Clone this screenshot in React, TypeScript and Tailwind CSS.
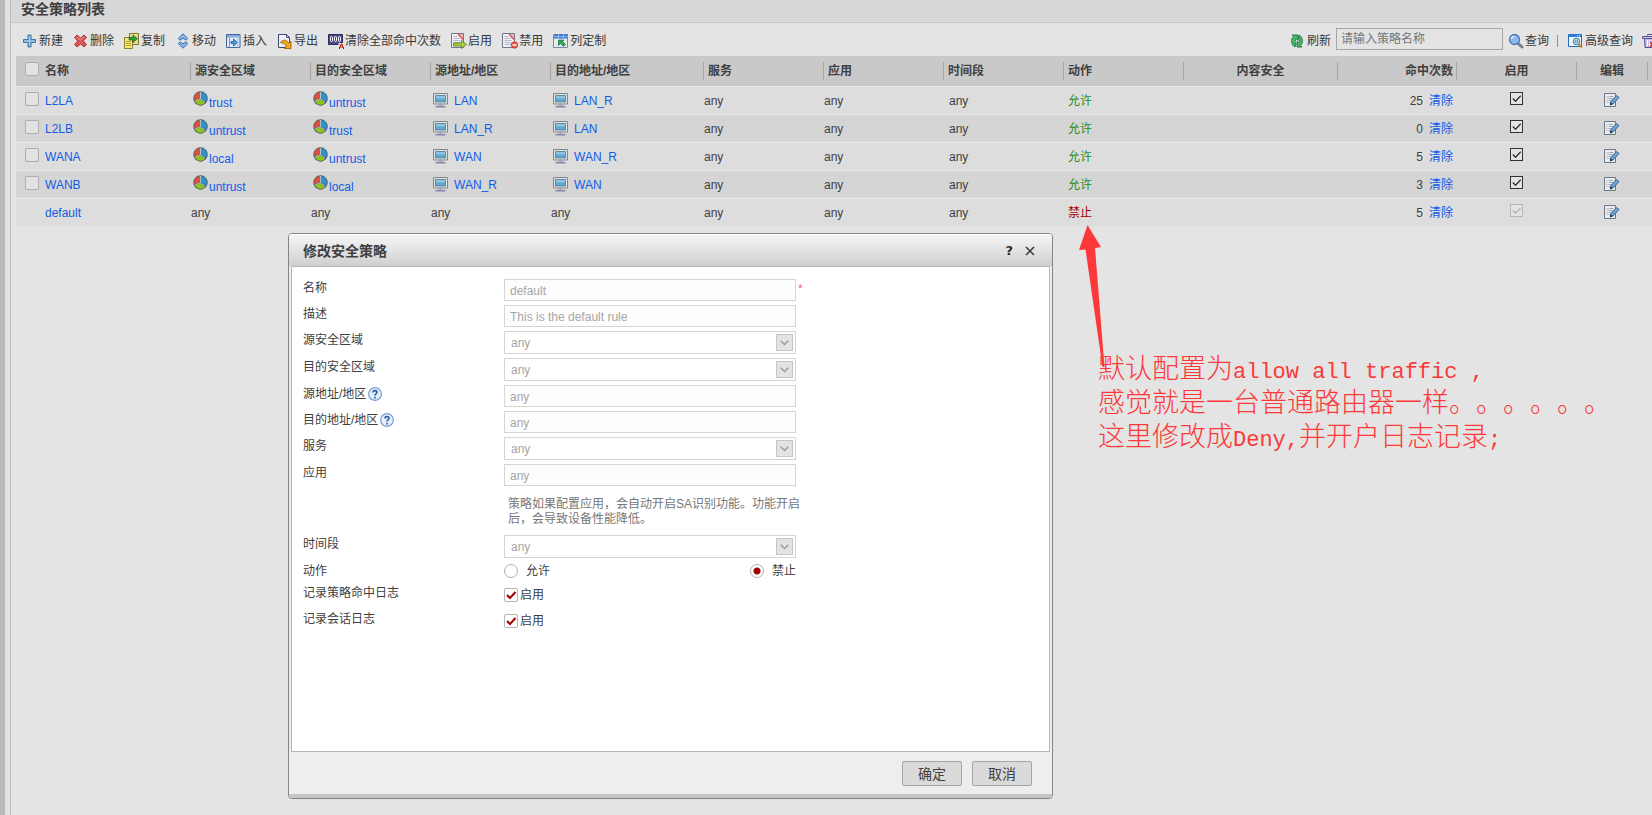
import type { ReactNode } from "react";

const sans = "font-['Liberation_Sans','Noto_Sans_CJK_SC',sans-serif]";

/* ---------- icons ---------- */

function Icon({ children }: { children: ReactNode }) {
  return (
    <svg width="16" height="16" viewBox="0 0 16 16" fill="none" className="shrink-0" aria-hidden="true">
      {children}
    </svg>
  );
}

const PlusIcon = () => (
  <Icon>
    <path d="M5.500 1.500h3v4.500h4.500v3h-4.500v4.500h-3v-4.500h-4.500v-3h4.500z" transform="translate(.5 .5)" fill="#7fb2dc" stroke="#3f75a8" />
    <path d="M7.500 3v10M2.500 8h10" stroke="#a4cbe8" />
  </Icon>
);

const DeleteIcon = () => (
  <Icon>
    <path d="M1.500 4.500 4 2l3.500 3L11 2l2.500 2.500L10.300 8l3.200 3.500L11 14l-3.500-3L4 14l-2.500-2.500L4.700 8z" fill="#d9555a" stroke="#b5343b" />
    <path d="m4 4 3.500 3L11 4" stroke="#ee9a98" />
  </Icon>
);

const CopyIcon = () => (
  <Icon>
    <path d="M5.500.5h9v11h-9z" fill="#e9dd8a" stroke="#7d742d" />
    <path d="M.5 4.500h8v11h-8z" fill="#f5e97b" stroke="#8a8030" />
    <path d="M2 8.500h5M2 10.500h5M2 12.500h5" stroke="#b59a1e" />
    <path d="M5 4.500h4V2l4.500 3.800L9 9.500V7H5z" fill="#2f9e3d" stroke="#17662a" strokeWidth=".7" />
  </Icon>
);

const MoveIcon = () => (
  <Icon>
    <path d="m8 .8 4.800 4.700-1.800 1.700-3-2-3 2-1.800-1.700z" fill="#86b7e2" stroke="#3872ad" />
    <path d="m8 15.200 4.800-4.700-1.800-1.700-3 2-3-2-1.800 1.700z" fill="#86b7e2" stroke="#3872ad" />
  </Icon>
);

const InsertIcon = () => (
  <Icon>
    <path d="M.5 1.500h13.500v13H.5z" fill="#dfe9f5" stroke="#41659f" />
    <path d="M1 2h12.500v2.500H1z" fill="#8aa7d6" />
    <path d="M3.500 4.500v10" stroke="#7d97c4" />
    <path d="M12 4.500v10" stroke="#b2c4e0" />
    <path d="M5 8.500h2.500V6l4 3.500-4 3.500v-2.500H5z" fill="#4f9be0" stroke="#235a9c" strokeWidth=".8" />
  </Icon>
);

const ExportIcon = () => (
  <Icon>
    <path d="M1.500 1.500h8l3 3v10h-11z" fill="#eef1f8" stroke="#3d467d" />
    <path d="M9.500 1.500v3h3" stroke="#3d467d" />
    <path d="M3.500 9.500c2-3 6-3.500 8 .5l2.500-1.500v7H7.500L9.300 13C8 10.500 6 10 3.500 9.500z" fill="#f5a81c" stroke="#8f5300" strokeWidth=".8" />
  </Icon>
);

const CounterIcon = () => (
  <Icon>
    <path d="M.5 1.500h14v10H.5z" fill="#4a4a86" stroke="#2d2d61" />
    <rect x="2.500" y="3.500" width="2" height="5" rx="1" stroke="#fff" />
    <rect x="6.500" y="3.500" width="2" height="5" rx="1" stroke="#fff" />
    <rect x="10.500" y="3.500" width="2" height="5" rx="1" stroke="#fff" />
    <path d="M10.500 10h5.500v6h-5.500z" fill="#e4e4e4" />
    <path d="M11.500 16v-2h4v2M12.500 13.500l.5-2.500h1l.5 2.500" stroke="#c00000" />
  </Icon>
);

const RuleSheet = () => (
  <>
    <path d="M.5.5h12v14H.5z" fill="#f0f1f5" stroke="#6e7787" />
    <path d="M2.500 3.500h4M2.500 5.500h6M2.500 7.500h7M2.500 9.500h7M2.500 11.500h7" stroke="#b3b9c6" />
    <path d="M7 1h5v6z" fill="#f2b4b4" />
    <path d="m7 1 5 5.500" stroke="#e05555" strokeWidth="1.500" />
  </>
);

const EnableIcon = () => (
  <Icon>
    <RuleSheet />
    <path d="M2.500 10h8V7.500L15.500 11.500l-5 4V13h-8z" fill="#a6cf3c" stroke="#4d7f1b" strokeWidth=".8" />
  </Icon>
);

const DisableIcon = () => (
  <Icon>
    <RuleSheet />
    <circle cx="12.500" cy="12" r="3.300" fill="#e2583e" stroke="#b1341f" strokeWidth=".6" />
    <path d="M10.500 12h4" stroke="#fff" strokeWidth="1.500" />
  </Icon>
);

const ColumnsIcon = () => (
  <Icon>
    <path d="M.5 1.500h14v13H.5z" fill="#e9eef5" stroke="#7688a8" />
    <path d="M1 1h13.500v4.500H1z" fill="#3f78cf" />
    <path d="M1 3.500h13.500M5.500 1v4M10.500 1v4" stroke="#a9c4ee" strokeWidth=".8" />
    <path d="M5.500 7h5.500L9.500 8.500l3 3-2 2-3-3-2 2z" fill="#2fa557" stroke="#13703a" strokeWidth=".7" />
  </Icon>
);

const RefreshIcon = () => (
  <Icon>
    <path d="M5 14C.8 12 .8 5.500 3.500 3.500L2 2h6v5.500L6.300 5.800C4.800 7 4.600 9.500 6 11z" fill="#49b96d" stroke="#13743a" strokeWidth=".9" />
    <path d="M9 2c4.200 2 4.200 8.500 1.500 10.500L12 14H7V8.500l1.500 1.700C9.700 9 9.700 6.500 8.500 5z" fill="#49b96d" stroke="#13743a" strokeWidth=".9" />
  </Icon>
);

const SearchIcon = () => (
  <Icon>
    <path d="m9.500 10 4.500 4" stroke="#76808c" strokeWidth="3" strokeLinecap="round" />
    <circle cx="6.500" cy="6.500" r="5" fill="#8fb8ec" stroke="#4d77b4" strokeWidth="1.300" />
    <path d="M3.500 6c.3-1.800 1.500-2.600 3-2.600" stroke="#e6f2ff" strokeWidth="1.400" />
  </Icon>
);

const AdvancedIcon = () => (
  <Icon>
    <path d="M.5 1.500h13v12H.5z" fill="#f4f8fc" stroke="#1d6bc4" />
    <path d="M1 1.500h12.500V4H1z" fill="#2d7fdc" />
    <path d="M9 2.700h1M11 2.700h1" stroke="#fff" />
    <path d="m10.500 11 3.500 3.500" stroke="#c28a1b" strokeWidth="2" />
    <circle cx="8.500" cy="8.500" r="3.300" fill="#bfe0f8" stroke="#48708f" />
    <circle cx="8.500" cy="8.500" r="1.300" stroke="#48708f" strokeWidth=".8" />
  </Icon>
);

const TrashIcon = () => (
  <Icon>
    <path d="M5.500 2.500v-1h5v1" stroke="#574f96" />
    <path d="M.5 3.500h14v2H.5z" fill="#cfcbe8" stroke="#574f96" />
    <path d="M2.500 5.500h10l-.5 9H3z" fill="#c3bfe0" stroke="#574f96" />
    <path d="M5.500 7v6M7.500 7v6" stroke="#fff" />
    <path d="m8 9 5 5M13 9l-5 5" stroke="#d22" strokeWidth="1.500" />
  </Icon>
);

const ZoneIcon = () => (
  <svg width="15" height="15" viewBox="0 0 15 15" className="shrink-0" aria-hidden="true">
    <circle cx="7.500" cy="7.500" r="7.200" fill="#4c5a60" />
    <path d="M7 7V1A6.300 6.300 0 0 0 1.600 9.300z" fill="#de5040" />
    <path d="M8 7V1a6.500 6.500 0 0 1 4.600 10.200z" fill="#2e93d3" />
    <path d="M7.500 8.200 2 10.600a6.500 6.500 0 0 0 9.800 1.600z" fill="#8ec31a" />
    <path d="M7.500 1v6.700L2 10M7.500 7.700l4.600 4" stroke="#cfdcdc" strokeWidth=".8" fill="none" />
  </svg>
);

const HostIcon = () => (
  <svg width="16" height="15" viewBox="0 0 16 15" className="shrink-0" aria-hidden="true">
    <path d="M.5.5h14v10.500H.5z" fill="#e2e2e2" stroke="#858585" />
    <path d="M2.500 2.500h10v6.500h-10z" fill="#5fa6cd" stroke="#5c8ba5" />
    <path d="M3 3h9v2.500H3z" fill="#8cc3df" />
    <path d="M5.500 11.500h4v1h-4z" fill="#8c8cb0" />
    <path d="M2.500 13h10v1.500h-10z" fill="#8581a8" />
  </svg>
);

const EditIcon = () => (
  <svg width="16" height="16" viewBox="0 0 16 16" fill="none" className="inline-block" aria-hidden="true">
    <path d="M.5 1.500h11v13H.5z" fill="#ebedef" stroke="#6d7785" />
    <path d="M2.500 4.500h1M2.500 6.500h1M2.500 8.500h1M2.500 10.500h1M4.500 4.500h5M4.500 6.500h5M4.500 8.500h4M4.500 10.500h2" stroke="#a2a8b2" />
    <path d="m6.300 12.700.9-3.400 5.300-5.800 2.500 2-5.300 6z" fill="#6ea6da" stroke="#2f5f8f" strokeWidth=".9" />
    <path d="m5.800 13.400.9-3 2.200 1.800z" fill="#1f3246" />
  </svg>
);

const HelpIcon = () => (
  <svg width="14" height="14" viewBox="0 0 14 14" fill="none" className="ml-0.5 shrink-0" aria-hidden="true">
    <circle cx="7" cy="7" r="6.400" fill="#e3eefb" stroke="#7c9fd8" strokeWidth="1.200" />
    <path d="M5 5.500C5 3 9 3 9 5.300 9 6.800 7 6.800 7 8.400M7 9.800v1.600" stroke="#2d5da8" strokeWidth="1.600" />
  </svg>
);

/* ---------- small controls ---------- */

function ToolButton({ icon, label }: { icon: ReactNode; label: string }) {
  return (
    <button type="button" className="flex items-center gap-px whitespace-nowrap text-[#383838]">
      {icon}
      {label}
    </button>
  );
}

type CheckProps = { label: string; checked?: boolean; disabled?: boolean; tone?: "dark" | "red"; id?: string };

function Check({ label, checked = false, disabled = false, tone = "dark", id }: CheckProps) {
  const look =
    tone === "red"
      ? "size-3.5 rounded-xs border-[#b5b5b5] bg-white"
      : checked
        ? "size-[13px] border-[#333] bg-[#e4e4e4] disabled:border-[#b5b5b5]"
        : "size-3.5 rounded-xs border-[#adadad] bg-[#e2e2e2]";
  return (
    <span className={`relative inline-flex align-middle ${disabled ? "text-[#b5b5b5]" : tone === "red" ? "text-[#a00000]" : "text-[#333]"}`}>
      <input
        id={id}
        type="checkbox"
        aria-label={id ? undefined : label}
        defaultChecked={checked}
        disabled={disabled}
        className={`peer appearance-none border ${look}`}
      />
      <svg viewBox="0 0 14 14" fill="none" className="pointer-events-none absolute inset-0 hidden size-full peer-checked:block" aria-hidden="true">
        <path d="m3 7 3 3 5.500-6" stroke="currentColor" strokeWidth={tone === "red" ? 2 : 1.4} />
      </svg>
    </span>
  );
}

/* ---------- policy table ---------- */

type Policy = { name: string; src: string; dst: string; srcAddr: string; dstAddr: string; hits: number };

const policies: Policy[] = [
  { name: "L2LA", src: "trust", dst: "untrust", srcAddr: "LAN", dstAddr: "LAN_R", hits: 25 },
  { name: "L2LB", src: "untrust", dst: "trust", srcAddr: "LAN_R", dstAddr: "LAN", hits: 0 },
  { name: "WANA", src: "local", dst: "untrust", srcAddr: "WAN", dstAddr: "WAN_R", hits: 5 },
  { name: "WANB", src: "untrust", dst: "local", srcAddr: "WAN_R", dstAddr: "WAN", hits: 3 },
  { name: "default", src: "any", dst: "any", srcAddr: "any", dstAddr: "any", hits: 5 },
];

const columns = [
  { title: "源安全区域", width: "w-[120px]", align: "pl-1" },
  { title: "目的安全区域", width: "w-[120px]", align: "pl-1" },
  { title: "源地址/地区", width: "w-[120px]", align: "pl-1" },
  { title: "目的地址/地区", width: "w-[153px]", align: "pl-1" },
  { title: "服务", width: "w-[120px]", align: "pl-1" },
  { title: "应用", width: "w-[120px]", align: "pl-1" },
  { title: "时间段", width: "w-[120px]", align: "pl-1" },
  { title: "动作", width: "w-[120px]", align: "pl-1" },
  { title: "内容安全", width: "w-[154px]", align: "justify-center" },
  { title: "命中次数", width: "w-[119px]", align: "justify-end pr-[3px]" },
  { title: "启用", width: "w-[120px]", align: "justify-center" },
  { title: "编辑", width: "w-[71px]", align: "justify-center" },
  { title: "", width: "w-[5px]", align: "" },
];

const link = "text-[#0f5ce8]";

function Zone({ name }: { name: string }) {
  if (name === "any") return <>any</>;
  return (
    <span className="flex items-start pl-0.5">
      <ZoneIcon />
      <a href="#zone" className={`pt-1 pl-px ${link}`}>
        {name}
      </a>
    </span>
  );
}

function Address({ name }: { name: string }) {
  if (name === "any") return <>any</>;
  return (
    <span className="flex items-center gap-[5px] pl-0.5">
      <HostIcon />
      <a href="#address" className={link}>
        {name}
      </a>
    </span>
  );
}

function PolicyTable() {
  return (
    <table className="w-full table-fixed border-separate border-spacing-0 text-left">
      <thead className="bg-[#c9c9c9]">
        <tr className="h-[30px]">
          <th className="p-0 pl-[9px]">
            <span className="flex items-center gap-[6px]">
              <span className="flex pb-1">
                <Check label="全选" />
              </span>
              名称
            </span>
          </th>
          {columns.map((c, i) => (
            <th key={i} className={`p-0 ${c.width}`}>
              <div className={`flex h-[18px] items-center whitespace-nowrap border-l border-[#a5a5a5] ${c.align}`}>{c.title}</div>
            </th>
          ))}
        </tr>
      </thead>
      <tbody className="[&_td]:border-t [&_td]:border-[#e8e8e8]">
        {policies.map((p) => {
          const isDefault = p.name === "default";
          return (
            <tr key={p.name} className="h-7 odd:bg-[#dddddd] even:bg-[#d5d5d5]">
              <td className="p-0">
                <span className="flex items-center gap-[6px] pl-[9px]">
                  {isDefault ? (
                    <span className="w-3.5" />
                  ) : (
                    <span className="flex pb-1">
                      <Check label={p.name} />
                    </span>
                  )}
                  <a href="#policy" className={link}>
                    {p.name}
                  </a>
                </span>
              </td>
              <td className="p-0 pl-px"><Zone name={p.src} /></td>
              <td className="p-0 pl-px"><Zone name={p.dst} /></td>
              <td className="p-0 pl-px"><Address name={p.srcAddr} /></td>
              <td className="p-0 pl-px"><Address name={p.dstAddr} /></td>
              <td className="p-0 pl-px">any</td>
              <td className="p-0 pl-px">any</td>
              <td className="p-0 pl-[6px]">any</td>
              <td className={`p-0 pl-[5px] ${isDefault ? "text-[#a00000]" : "text-[#1f8f2a]"}`}>{isDefault ? "禁止" : "允许"}</td>
              <td className="p-0" />
              <td className="p-0">
                <div className="flex justify-end gap-[6px] pr-[3px]">
                  {p.hits}
                  <a href="#clear" className={link}>清除</a>
                </div>
              </td>
              <td className="p-0 pb-1 pl-px text-center leading-none">
                <Check label={`启用 ${p.name}`} checked disabled={isDefault} />
              </td>
              <td className="p-0 pb-0.5 text-center leading-none">
                <button type="button" aria-label={`编辑 ${p.name}`} className="align-middle">
                  <EditIcon />
                </button>
              </td>
              <td className="p-0" />
            </tr>
          );
        })}
      </tbody>
    </table>
  );
}

/* ---------- edit dialog ---------- */

function Row({ label, id, help, children }: { label: string; id?: string; help?: boolean; children: ReactNode }) {
  return (
    <div className="flex items-start">
      <div className="flex w-[201px] shrink-0 items-center leading-[18px]">
        {id ? <label htmlFor={id}>{label}</label> : <span>{label}</span>}
        {help && <HelpIcon />}
      </div>
      {children}
    </div>
  );
}

function TextRow({ label, id, value, help, required }: { label: string; id: string; value: string; help?: boolean; required?: boolean }) {
  return (
    <Row label={label} id={id} help={help}>
      <input id={id} type="text" disabled defaultValue={value} className="h-[22px] w-[292px] border border-[#d5d5d5] bg-[#fdfdfd] px-[5px] pt-0.5 text-[#a5a5a5]" />
      {required && <span className="pl-0.5 leading-5 text-[#f66]">*</span>}
    </Row>
  );
}

function SelectRow({ label, id }: { label: string; id: string }) {
  return (
    <Row label={label} id={id}>
      <div className="relative">
        <select id={id} disabled className="block h-[23px] w-[292px] appearance-none border border-[#d5d5d5] bg-white px-[6px] text-[#a5a5a5] opacity-100">
          <option>any</option>
        </select>
        <span className="pointer-events-none absolute top-[3px] right-[3px] flex size-[17px] items-center justify-center border border-[#c5c5c8] bg-[#e3e3e3]">
          <svg width="9" height="6" viewBox="0 0 9 6" fill="none" aria-hidden="true">
            <path d="m.7.8 3.800 3.700L8.300.8" stroke="#9b9b9b" strokeWidth="1.500" />
          </svg>
        </span>
      </div>
    </Row>
  );
}

const radio =
  "size-3.5 appearance-none rounded-full border border-[#b0b0b0] bg-white checked:bg-[radial-gradient(circle,#a00000_3px,transparent_4px)]";

function EditDialog() {
  return (
    <section
      role="dialog"
      aria-labelledby="dialog-title"
      className="absolute top-[233px] left-[288px] flex h-[566px] w-[765px] flex-col overflow-hidden rounded border border-[#858585] bg-[#eeeeee]"
    >
      <header className="flex h-8 shrink-0 items-center border-t border-white bg-linear-to-b from-[#f6f6f6] to-[#cfcfcf] pr-[17px] pl-[14px]">
        <h2 id="dialog-title" className="text-sm font-bold">修改安全策略</h2>
        <button type="button" aria-label="帮助" className="ml-auto font-['DejaVu_Sans',sans-serif] text-[13px] font-bold text-[#2b2b2b]">
          ?
        </button>
        <button type="button" aria-label="关闭" className="ml-3 text-[#3c3c3c]">
          <svg width="10" height="10" viewBox="0 0 10 10" fill="none" aria-hidden="true">
            <path d="m1 1 8 8M9 1 1 9" stroke="currentColor" strokeWidth="1.600" />
          </svg>
        </button>
      </header>

      <form className="mx-0.5 flex grow flex-col gap-1 border border-[#b5b5b5] bg-white pt-3 pl-[11px]">
        <TextRow label="名称" id="name" value="default" required />
        <TextRow label="描述" id="desc" value="This is the default rule" />
        <SelectRow label="源安全区域" id="src-zone" />
        <SelectRow label="目的安全区域" id="dst-zone" />
        <TextRow label="源地址/地区" id="src-addr" value="any" help />
        <TextRow label="目的地址/地区" id="dst-addr" value="any" help />
        <SelectRow label="服务" id="service" />
        <TextRow label="应用" id="app" value="any" />
        <p className="ml-[205px] w-[296px] pt-[7px] pb-1 leading-[15px] text-[#777]">
          策略如果配置应用，会自动开启SA识别功能。功能开启后，会导致设备性能降低。
        </p>
        <SelectRow label="时间段" id="schedule" />
        <Row label="动作">
          <div className="flex h-[18px] w-[292px] items-center justify-between">
            <label className="flex items-center gap-2">
              <input type="radio" name="action" className={radio} />
              允许
            </label>
            <label className="flex items-center gap-2">
              <input type="radio" name="action" defaultChecked className={radio} />
              禁止
            </label>
          </div>
        </Row>
        <Row label="记录策略命中日志">
          <div className="flex h-[22px] items-center gap-0.5">
            <Check id="hit-log" label="启用" checked tone="red" />
            <label htmlFor="hit-log">启用</label>
          </div>
        </Row>
        <Row label="记录会话日志">
          <div className="flex h-[22px] items-center gap-0.5">
            <Check id="session-log" label="启用" checked tone="red" />
            <label htmlFor="session-log">启用</label>
          </div>
        </Row>
      </form>

      <footer className="flex shrink-0 justify-end gap-[10px] border-b-4 border-[#c5c5c5] pt-[9px] pr-[20px] pb-2 text-sm">
        <button type="button" className="h-[25px] w-[60px] rounded-xs border border-[#a5a5aa] bg-[#dadada] leading-none">确定</button>
        <button type="button" className="h-[25px] w-[60px] rounded-xs border border-[#a5a5aa] bg-[#dadada] leading-none">取消</button>
      </footer>
    </section>
  );
}

/* ---------- red note with arrow ---------- */

function Note() {
  const latin = "font-['Liberation_Mono',monospace] text-[22px] leading-none";
  return (
    <div className="pointer-events-none absolute top-[225px] left-[1079px] whitespace-nowrap text-[#fd3838]">
      <svg width="26" height="142" viewBox="0 0 26 142" fill="currentColor" aria-hidden="true">
        <path d="M8.500 0 22 22l-6 1L25.500 142h-2L6.500 24.500 0 25z" />
      </svg>
      <div className="-mt-[17px] ml-[19px] font-['Noto_Sans_CJK_SC',sans-serif] text-[27px] leading-[34px] font-light [text-spacing-trim:space-all]">
        <p className="h-[34px]">
          默认配置为<span className={latin}>allow all traffic ,</span>
        </p>
        <p className="h-[34px]">感觉就是一台普通路由器一样。。。。。。</p>
        <p className="h-[34px]">
          这里修改成<span className={latin}>Deny,</span>并开户日志记录<span className={latin}>;</span>
        </p>
      </div>
    </div>
  );
}

export default function App() {
  return (
    <div className={`relative flex min-h-screen overflow-hidden bg-[#e4e4e4] text-xs text-[#404040] ${sans}`}>
      <div className="w-[5px] shrink-0 bg-[#b9b9b9]" />
      <div className="w-[5px] shrink-0 bg-[#e2e2e2]" />
      <main className="min-w-0 grow border-l border-[#bdbdbd]">
        <h1 className="h-[23px] border-b border-[#c8c8c8] bg-[#d8d8d8] pl-[10px] text-sm leading-[18px] font-bold">安全策略列表</h1>

        <div className="flex h-[33px] items-center gap-[10px] overflow-hidden pt-0.5 pl-[11px]">
          <ToolButton icon={<PlusIcon />} label="新建" />
          <ToolButton icon={<DeleteIcon />} label="删除" />
          <ToolButton icon={<CopyIcon />} label="复制" />
          <ToolButton icon={<MoveIcon />} label="移动" />
          <ToolButton icon={<InsertIcon />} label="插入" />
          <ToolButton icon={<ExportIcon />} label="导出" />
          <ToolButton icon={<CounterIcon />} label="清除全部命中次数" />
          <ToolButton icon={<EnableIcon />} label="启用" />
          <ToolButton icon={<DisableIcon />} label="禁用" />
          <ToolButton icon={<ColumnsIcon />} label="列定制" />

          <div className="-mr-[6px] ml-auto flex shrink-0 items-center">
            <ToolButton icon={<RefreshIcon />} label="刷新" />
            <input
              type="search"
              aria-label="策略名称"
              placeholder="请输入策略名称"
              className="mr-[5px] mb-[3px] ml-[5px] h-[22px] w-[167px] border border-[#a5a5aa] bg-[#e4e4e4] px-1 placeholder:text-[#757575]"
            />
            <ToolButton icon={<SearchIcon />} label="查询" />
            <span className="mr-[10px] ml-2 h-3 w-px bg-[#909090]" />
            <ToolButton icon={<AdvancedIcon />} label="高级查询" />
            <button type="button" aria-label="清空" className="ml-[9px]">
              <TrashIcon />
            </button>
          </div>
        </div>

        <div className="pl-[5px]">
          <PolicyTable />
        </div>
      </main>

      <EditDialog />
      <Note />
    </div>
  );
}
